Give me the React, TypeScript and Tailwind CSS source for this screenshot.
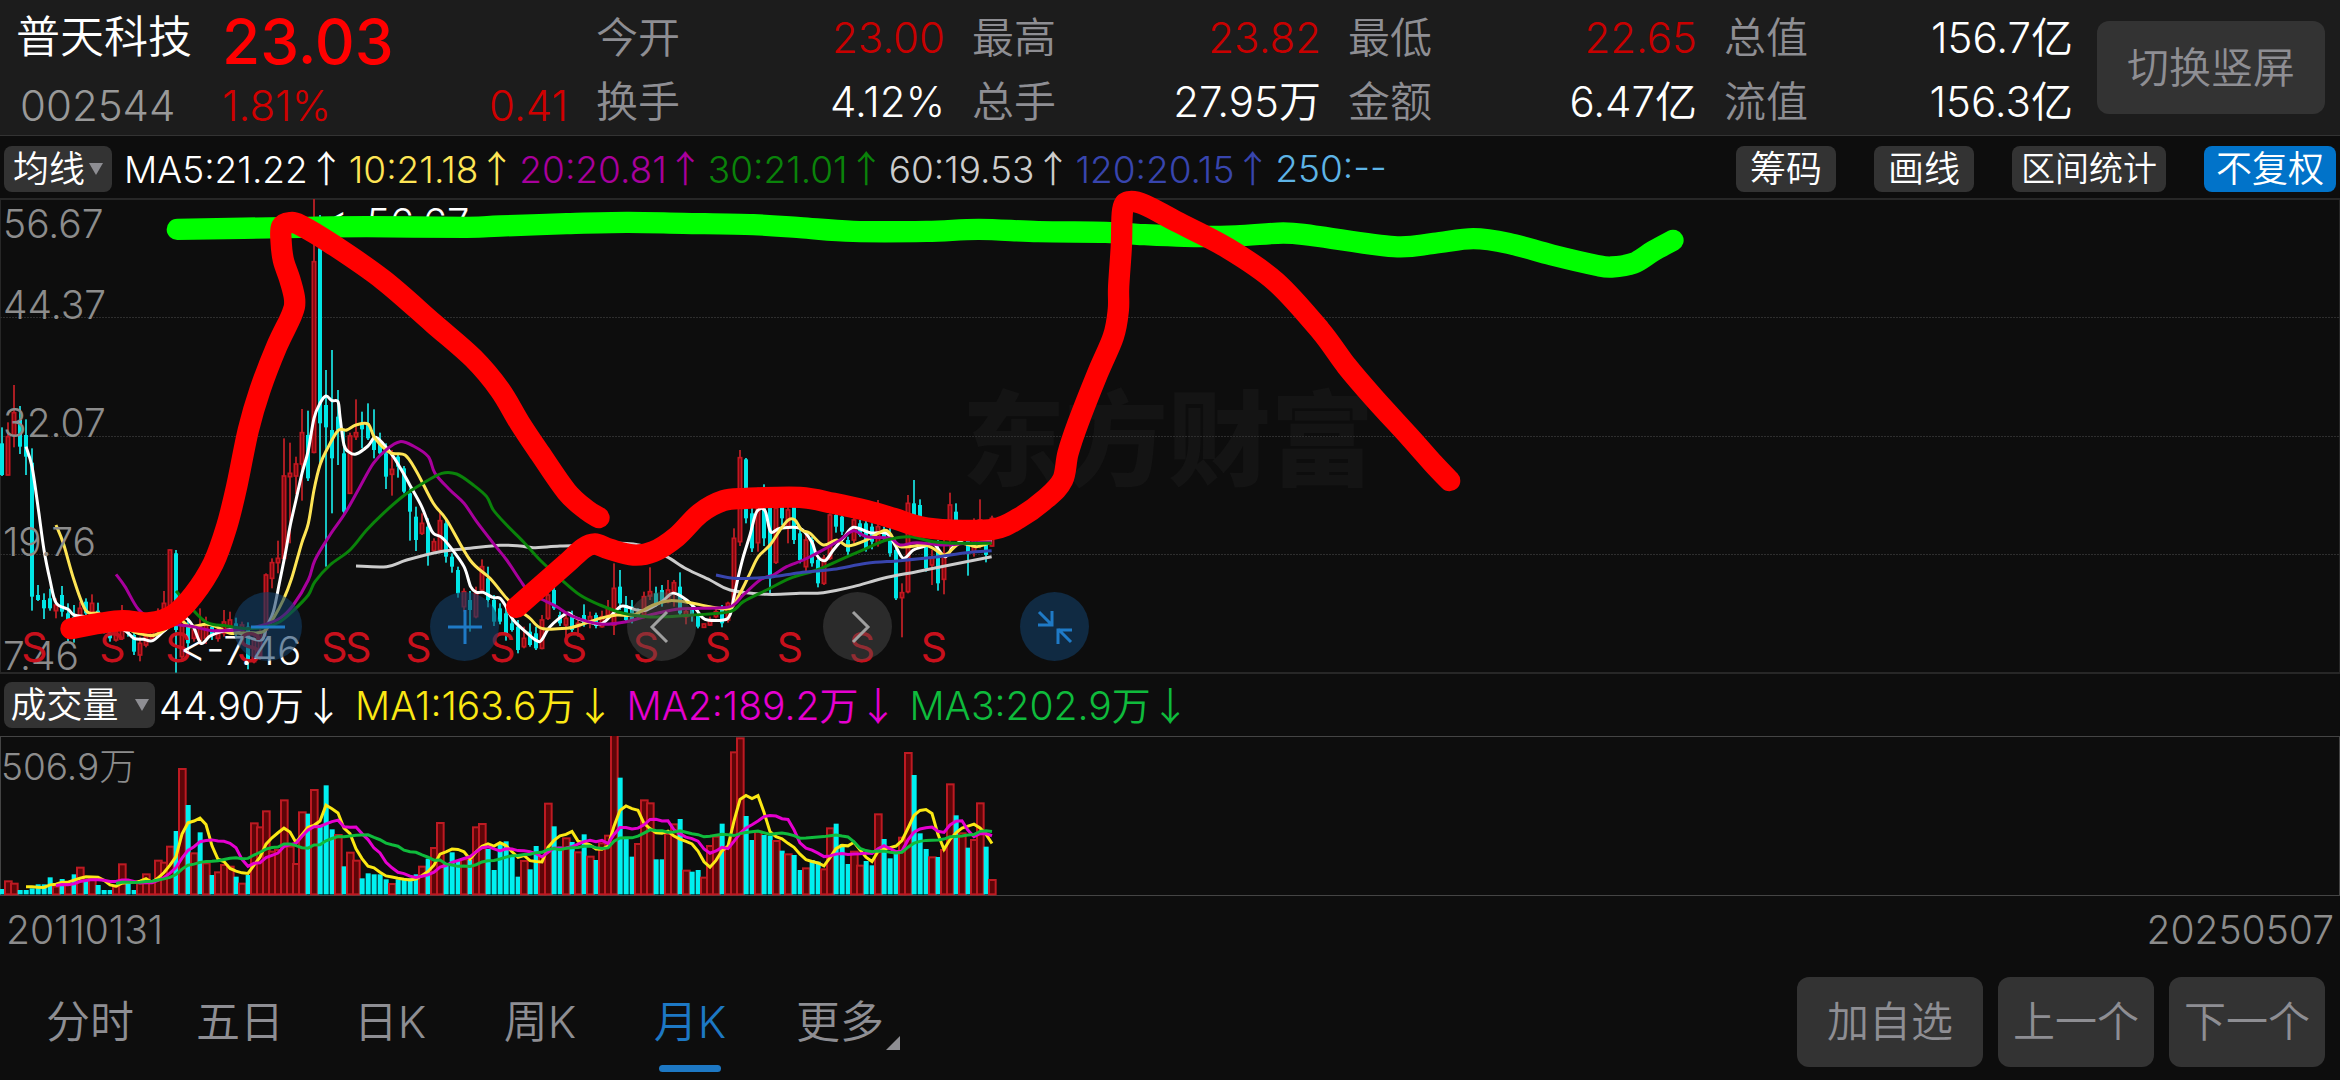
import * as React from "react";
import clsx from "clsx";

// Candle geometry is kept at three units per pixel.
// Each entry: colour (r = up, c = down), high, body top, body bottom, low.
const CANDLES = `
c712,760,855,858 r697,740,855,855 r585,668,735,772 c648,690,770,792 c688,735,800,855
c775,818,1220,1262 c1185,1215,1230,1233 c1210,1230,1255,1287 c1196,1225,1255,1262 r1225,1245,1262,1285
c1188,1215,1265,1280 c1240,1270,1320,1358 c1245,1280,1330,1358 r1235,1255,1280,1300 c1225,1235,1270,1290
r1213,1240,1265,1280 c1238,1262,1285,1300 c1280,1290,1320,1330 c1300,1310,1345,1355 r1320,1325,1350,1355
r1245,1290,1345,1350 c1280,1300,1330,1340 c1320,1335,1385,1395 r1340,1360,1395,1414 r1300,1340,1365,1372
r1280,1300,1345,1355 r1255,1270,1320,1330 r1203,1240,1290,1320 r1078,1080,1260,1280 c1080,1090,1320,1448
r1260,1290,1400,1410 c1290,1310,1360,1385 r1310,1320,1345,1355 r1255,1310,1350,1365 r1280,1300,1345,1362
c1300,1310,1335,1350 r1310,1320,1345,1355 r1260,1296,1330,1340 r1265,1290,1310,1330 c1283,1300,1330,1345
r1295,1305,1330,1340 c1297,1310,1410,1438 r1340,1350,1415,1420 r1310,1325,1400,1410 r1150,1155,1320,1340
r1105,1118,1165,1195 r1052,1105,1118,1150 r745,858,1105,1118 r758,850,860,1060 r800,822,858,912
r657,728,822,932 c662,735,865,873 r27,215,787,790 c75,175,700,820 c540,645,712,1130
c480,720,805,970 c600,680,720,825 c720,790,965,972 r728,738,910,912 r628,728,740,750
c665,700,718,775 c640,700,745,750 c658,745,780,805 c728,755,790,795 c760,790,860,897
r780,838,853,917 c795,800,830,863 c828,835,905,910 c895,910,965,1052 c950,980,1050,1083
r970,1000,1030,1035 c985,1010,1090,1127 r1045,1055,1082,1085 r965,992,1080,1085 c985,1000,1100,1118
c1090,1100,1130,1148 c1130,1140,1210,1223 r1195,1205,1250,1265 c1203,1230,1260,1325 r1190,1210,1280,1285
r1108,1130,1200,1205 c1130,1165,1230,1252 c1215,1230,1295,1308 c1240,1255,1295,1303 c1250,1270,1330,1352
c1285,1300,1320,1325 c1290,1310,1380,1390 r1310,1345,1370,1375 c1300,1325,1365,1370 c1310,1330,1375,1380
r1275,1290,1375,1378 r1200,1215,1285,1290 c1190,1200,1255,1260 c1265,1275,1300,1308 r1275,1285,1305,1345
c1262,1280,1320,1327 r1285,1300,1310,1340 c1243,1275,1300,1310 r1265,1280,1300,1315 c1268,1275,1308,1315
r1262,1280,1310,1313 r1230,1255,1275,1280 r1120,1195,1305,1335 c1140,1190,1240,1260 c1218,1245,1290,1295
c1230,1250,1290,1300 c1255,1265,1280,1290 r1205,1220,1275,1285 r1132,1205,1218,1230 c1190,1210,1240,1250
c1185,1200,1240,1250 r1170,1200,1235,1240 r1170,1178,1205,1250 c1147,1190,1270,1280 r1255,1265,1280,1303
c1240,1255,1275,1295 c1260,1275,1310,1315 r1300,1302,1312,1314 r1280,1290,1305,1308 r1255,1265,1280,1285
c1245,1260,1300,1312 r1235,1240,1290,1298 r1015,1045,1240,1250 r780,803,1055,1068 c804,808,985,1000
c950,970,1075,1086 r893,920,1058,1085 c883,900,1045,1068 c930,950,1165,1215 r940,955,1117,1122
c945,950,985,1005 r940,960,1010,1060 c945,950,1050,1062 c1010,1030,1110,1120 r1030,1050,1130,1145
c1040,1050,1120,1130 c1100,1110,1180,1192 r1095,1105,1180,1185 r970,975,1105,1110 c970,975,1010,1028
c970,980,1025,1035 c1040,1050,1085,1097 r980,990,1050,1060 c990,1000,1035,1040 c985,1000,1075,1085
c1000,1010,1055,1078 r930,1010,1060,1070 c1010,1020,1045,1050 c1010,1040,1090,1100 c1060,1080,1225,1230
r1180,1208,1223,1342 r915,940,1205,1210 c870,940,975,1000 c928,945,1000,1010 c1060,1070,1135,1145
r1080,1105,1125,1185 c1050,1080,1180,1202 r1050,1090,1168,1213 r908,945,1000,1090 c940,965,1000,1020
r1010,1030,1050,1060 c1020,1040,1090,1157 r985,1000,1085,1100 r928,990,1060,1075 c1040,1050,1095,1117
r977,985,1068,1070`
  .trim()
  .split(/\s+/)
  .map((item) => ({ up: item[0] === "r", v: item.slice(1).split(",").map(Number) }));

// Volume bar tops on the same grid, base line at 675.
const VOLUMES = `
c657 r634 r641 c660 c660 c655 c643 c643 c622 r650 c627 r640 c613 r593 c630 r628 c645 c660 c660 r650
r583 c635 c660 r640 r613 r635 r572 r578 r530 c483 r297 c405 r550 c487 r580 c615 r607 r585 r590 c620
r641 c615 r460 r472 r424 r545 r540 r391 r530 r582 r427 c431 r360 c465 c346 c478 r495 c589 r548 r572
c625 c610 c613 c613 c628 r642 c628 c628 c625 c613 r590 c566 r534 r459 c580 c547 c572 r568 c570 r472
r462 c537 c600 c520 c514 c555 c620 r573 c598 c528 r560 r401 c469 c530 r505 c516 r547 c493 r560 c570
r520 r497 r195 c323 c505 c560 r522 r391 r400 c568 c568 r492 r463 c447 r602 c605 c600 r623 r528 r500
c461 r530 r247 r205 c438 c510 r485 c495 c497 r513 c542 r553 c555 c600 r595 c570 c575 r598 r475 c461
c522 c582 r545 r587 c573 c586 r433 c507 c565 c550 r503 r249 c315 c490 c537 r562 c561 r540 r343 c436
r490 c533 r510 r400 c530 r630`
  .trim()
  .split(/\s+/)
  .map((item) => ({ up: item[0] === "r", top: Number(item.slice(1)) }));

const PRICE_LINES = [
  {
    color: "#cccccc",
    points:
      "1068,1128 1160,1130 1220,1110 1320,1085 1410,1075 1500,1066 1560,1068 1600,1073 1680,1068 1780,1065 1860,1060 1930,1068 2000,1100 2060,1137 2130,1170 2190,1200 2300,1213 2400,1210 2470,1208 2560,1190 2650,1165 2750,1145 2850,1125 2975,1100",
  },
  {
    color: "#ffffff",
    points:
      "78,770 96,830 114,950 132,1080 150,1170 168,1238 204,1258 222,1275 260,1280 300,1285 350,1310 380,1325 402,1345 430,1348 458,1352 490,1325 520,1300 555,1283 580,1310 603,1360 630,1338 665,1325 700,1320 740,1340 785,1350 800,1310 820,1265 840,1170 858,1080 870,1010 888,930 906,850 924,785 942,685 960,640 978,618 996,632 1014,635 1020,680 1032,765 1048,787 1068,792 1104,768 1125,742 1150,762 1180,800 1210,850 1235,895 1265,950 1285,1000 1300,1030 1325,1042 1350,1070 1392,1130 1412,1190 1430,1207 1450,1207 1478,1222 1500,1225 1518,1250 1540,1290 1580,1328 1610,1352 1625,1350 1650,1310 1700,1270 1720,1280 1745,1290 1800,1302 1830,1280 1860,1250 1880,1250 1910,1260 1940,1260 1985,1235 2020,1210 2060,1230 2090,1260 2115,1288 2170,1290 2190,1275 2202,1220 2215,1160 2230,1100 2250,1035 2270,965 2295,962 2312,1025 2340,1015 2400,1015 2435,1055 2450,1095 2475,1112 2500,1080 2530,1045 2560,1012 2610,1028 2660,1030 2685,1065 2710,1105 2740,1080 2770,1070 2800,1060 2835,1100 2860,1070 2900,1045 2940,1050 2975,1055",
  },
  {
    color: "#fee555",
    points:
      "168,1005 190,1060 222,1170 258,1262 295,1270 340,1290 400,1325 440,1335 465,1335 500,1315 540,1290 570,1310 620,1303 660,1315 690,1330 740,1328 790,1325 820,1285 850,1230 875,1165 905,1060 925,1000 942,900 960,825 980,780 1014,722 1040,720 1068,705 1104,702 1125,745 1170,788 1215,795 1250,845 1300,940 1340,990 1410,1110 1470,1165 1520,1225 1560,1262 1590,1285 1625,1315 1700,1315 1740,1305 1800,1285 1850,1275 1900,1275 1960,1245 2010,1232 2070,1238 2130,1250 2190,1255 2220,1210 2250,1150 2275,1100 2310,1065 2340,1020 2365,990 2385,990 2405,1020 2430,1030 2470,1065 2510,1050 2545,1068 2600,1050 2650,1022 2670,1030 2700,1070 2770,1065 2800,1075 2835,1095 2880,1060 2930,1070 2975,1055",
  },
  {
    color: "#a8009c",
    points:
      "348,1153 375,1190 415,1258 460,1290 520,1303 580,1310 640,1322 730,1318 790,1305 840,1285 880,1245 925,1170 945,1110 990,1035 1035,970 1080,890 1120,820 1160,778 1200,755 1240,768 1285,800 1305,850 1350,900 1392,940 1430,995 1480,1060 1520,1110 1560,1170 1590,1210 1630,1230 1670,1250 1720,1280 1800,1302 1880,1295 1950,1275 2030,1258 2100,1255 2190,1250 2230,1215 2280,1170 2320,1155 2360,1130 2410,1110 2460,1085 2520,1050 2560,1022 2600,1040 2670,1045 2700,1065 2750,1058 2830,1065 2900,1060 2975,1055",
  },
  {
    color: "#0a830a",
    points:
      "528,1203 570,1250 620,1297 680,1308 740,1316 800,1310 840,1295 880,1262 925,1215 945,1175 990,1125 1050,1080 1100,1020 1150,970 1210,918 1260,885 1325,850 1370,852 1420,885 1460,920 1480,960 1520,1005 1570,1055 1620,1110 1680,1165 1740,1215 1800,1245 1870,1270 1940,1280 2000,1280 2080,1275 2190,1265 2230,1235 2300,1200 2370,1165 2450,1140 2520,1110 2600,1075 2660,1050 2730,1040 2800,1055 2880,1060 2975,1060",
  },
  {
    color: "#3845ae",
    points:
      "2148,1155 2200,1165 2250,1165 2320,1160 2400,1148 2500,1138 2600,1120 2700,1112 2800,1102 2900,1088 2975,1082",
  },
];

const GREEN_MARK =
  "532,118 900,112 1100,110 1400,112 1500,108 1700,101 1880,97 2050,100 2260,104 2400,113 2560,124 2780,124 2937,118 3115,125 3317,127 3412,133 3554,139 3708,138 3850,129 3945,138 4182,170 4301,160 4420,146 4526,160 4656,195 4790,226 4835,231 4900,220 4960,183 5019,151";

const RED_MARKS = [
  "213,1316 300,1300 370,1292 450,1298 520,1275 580,1215 640,1120 680,1010 710,890 745,720 780,600 830,470 875,375 884,330 870,270 850,210 843,150 845,110 870,98 900,105 1000,165 1150,270 1300,400 1420,505 1500,600 1560,700 1620,790 1700,905 1760,960 1797,983",
  "1550,1252 1620,1190 1700,1120 1750,1075 1785,1062 1830,1078 1900,1095 1960,1085 2030,1040 2100,970 2170,932 2240,925 2400,922 2500,940 2600,962 2680,985 2760,1010 2850,1020 2979,1018 3056,985 3139,925 3188,870 3204,790 3234,700 3293,550 3340,440 3355,360 3356,290 3364,170 3368,60 3388,35 3435,45 3530,95 3684,175 3827,275 3960,420 4040,528 4123,625 4230,742 4301,822 4349,872",
];

const SELL_MARKS = [103, 337, 535, 750, 1003, 1075, 1255, 1507, 1722, 1938, 2154, 2370, 2586, 2802];

const Y_LABELS = [
  { text: "56.67", y: 145 },
  { text: "44.37", y: 387 },
  { text: "32.07", y: 742 },
  { text: "19.76", y: 1098 },
  { text: "7.46", y: 1440 },
];

const QUOTES = [
  { label: "今开", value: "23.00", red: true, label2: "换手", value2: "4.12%" },
  { label: "最高", value: "23.82", red: true, label2: "总手", value2: "27.95万" },
  { label: "最低", value: "22.65", red: true, label2: "金额", value2: "6.47亿" },
  { label: "总值", value: "156.7亿", red: false, label2: "流值", value2: "156.3亿" },
];

const MA_ITEMS = [
  { text: "MA5:21.22", arrow: "↑", className: "text-white" },
  { text: "10:21.18", arrow: "↑", className: "text-[#fee555]" },
  { text: "20:20.81", arrow: "↑", className: "text-[#a8009c]" },
  { text: "30:21.01", arrow: "↑", className: "text-[#0a830a]" },
  { text: "60:19.53", arrow: "↑", className: "text-[#cccccc]" },
  { text: "120:20.15", arrow: "↑", className: "text-[#3845ae]" },
  { text: "250:--", arrow: "", className: "text-[#5eb4e6]" },
];

const VOL_ITEMS = [
  { text: "44.90万", arrow: "↓", className: "text-white" },
  { text: "MA1:163.6万", arrow: "↓", className: "text-[#fbe814]" },
  { text: "MA2:189.2万", arrow: "↓", className: "text-[#e600cf]" },
  { text: "MA3:202.9万", arrow: "↓", className: "text-[#0fbb3c]" },
];

const TABS = ["分时", "五日", "日K", "周K", "月K", "更多"];

// Catmull-Rom spline through the given points.
function smooth(points: string) {
  const p = points.split(" ").map((s) => s.split(",").map(Number));
  let d = `M${p[0][0]} ${p[0][1]}`;
  for (let i = 0; i < p.length - 1; i++) {
    const a = p[Math.max(i - 1, 0)];
    const b = p[i];
    const c = p[i + 1];
    const e = p[Math.min(i + 2, p.length - 1)];
    d += `C${b[0] + (c[0] - a[0]) / 6} ${b[1] + (c[1] - a[1]) / 6} ${c[0] - (e[0] - b[0]) / 6} ${
      c[1] - (e[1] - b[1]) / 6
    } ${c[0]} ${c[1]}`;
  }
  return d;
}

function movingAverage(span: number) {
  const out: string[] = [];
  for (let i = span - 1; i < VOLUMES.length; i++) {
    let sum = 0;
    for (let k = 0; k < span; k++) sum += VOLUMES[i - k].top;
    out.push(`${18 * i + 6},${sum / span}`);
  }
  return out.join(" ");
}

function PriceChart() {
  return (
    <svg viewBox="0 0 2340 474" className="block w-full overflow-visible" aria-label="月K线">
      <rect x="0" y="0" width="2340" height="474" fill="none" stroke="#272727" strokeWidth="2" />
      <text
        x="962"
        y="279"
        fontSize="103"
        fontWeight="900"
        fill="#141414"
        fontFamily="'Noto Sans CJK SC', sans-serif"
      >
        东方财富
      </text>
      {[118, 237, 355].map((y) => (
        <line key={y} x1="0" x2="2340" y1={y + 0.5} y2={y + 0.5} stroke="#2e2e2e" strokeDasharray="2 1" />
      ))}
      <g transform="translate(0 -9) scale(0.33333)">
        {CANDLES.map(({ up, v }, i) => {
          const x = 18 * i + 6;
          return up ? (
            <g key={i}>
              <line x1={x} x2={x} y1={v[0]} y2={v[3]} stroke="#a91d22" strokeWidth="6" />
              <rect
                x={x - 5}
                y={v[1]}
                width="10"
                height={Math.max(v[2] - v[1], 4)}
                fill="#7a0a0f"
                stroke="#c41620"
                strokeWidth="5"
              />
            </g>
          ) : (
            <g key={i}>
              <line x1={x} x2={x} y1={v[0]} y2={v[3]} stroke="#16c4c4" strokeWidth="6" />
              <rect x={x - 6} y={v[1]} width="12" height={v[2] - v[1]} fill="#00e6e6" />
            </g>
          );
        })}
        {PRICE_LINES.map((line) => (
          <path key={line.color} d={smooth(line.points)} fill="none" stroke={line.color} strokeWidth="9" />
        ))}
      </g>
      <g fontSize="39" fontWeight="300" fill="#8c8c8c">
        {Y_LABELS.map(({ text, y }) => (
          <text key={text} x="3" y={y / 3 - 9}>
            {text}
          </text>
        ))}
      </g>
      <g fontSize="41" fontWeight="400" fill="#c8101c" textAnchor="middle">
        {SELL_MARKS.map((x) => (
          <text key={x} x={x / 3} y="463">
            S
          </text>
        ))}
      </g>
      <g fontSize="40" fontWeight="350" fill="#ffffff">
        <text x="180" y="466">
          &lt;-7.46
        </text>
        <text x="322" y="38">
          &lt;-56.67
        </text>
      </g>
    </svg>
  );
}

function HandMarks() {
  return (
    <svg viewBox="0 0 2340 474" className="pointer-events-none absolute inset-x-0 top-0 w-full overflow-visible">
      <g
        transform="translate(0 -9) scale(0.33333)"
        fill="none"
        strokeWidth="64"
        strokeLinecap="round"
        strokeLinejoin="round"
      >
        <path d={smooth(GREEN_MARK)} stroke="#00ff00" />
        {RED_MARKS.map((mark) => (
          <path key={mark} d={smooth(mark)} stroke="#ff0000" />
        ))}
      </g>
    </svg>
  );
}

function VolumeChart() {
  return (
    <svg viewBox="0 0 2340 160" className="block w-full" aria-label="成交量图">
      <rect x="0.5" y="0.5" width="2339" height="159" fill="none" stroke="#444444" />
      <g transform="translate(0 -66) scale(0.33333)">
        {VOLUMES.map(({ up, top }, i) => {
          const x = 18 * i + 6;
          return up ? (
            <rect
              key={i}
              x={x - 9}
              y={top}
              width="20"
              height={673 - top}
              fill="#5e0508"
              stroke="#bd1a22"
              strokeWidth="6"
            />
          ) : (
            <rect key={i} x={x - 7} y={top} width="15" height={673 - top} fill="#00f0f0" />
          );
        })}
        <polyline points={movingAverage(5)} fill="none" stroke="#fbe814" strokeWidth="9" />
        <polyline points={movingAverage(10)} fill="none" stroke="#e600cf" strokeWidth="9" />
        <polyline points={movingAverage(20)} fill="none" stroke="#0fbb3c" strokeWidth="9" />
      </g>
      <text x="1" y="44" fontSize="37" fontWeight="300" fill="#8c8c8c">
        506.9万
      </text>
    </svg>
  );
}

interface ChartButtonProps {
  label: string;
  blue?: boolean;
  className: string;
  children: React.ReactNode;
}

function ChartButton({ label, blue, className, children }: ChartButtonProps) {
  return (
    <button
      type="button"
      aria-label={label}
      className={clsx(
        "absolute top-[393px] flex h-[69px] w-[69px] items-center justify-center rounded-full",
        blue ? "bg-[#133e66]/60 text-[#1f7ac6]" : "bg-[#505050]/45 text-[#a0a0a0]",
        className
      )}
    >
      <svg viewBox="0 0 36 36" className="h-9 w-9" fill="none" stroke="currentColor" strokeWidth="3">
        {children}
      </svg>
    </button>
  );
}

function Indicators({ items, className }: { items: typeof MA_ITEMS; className?: string }) {
  return (
    <div className={clsx("flex items-center whitespace-nowrap", className)}>
      {items.map((item) => (
        <span key={item.text} className={item.className}>
          {item.text}
          {item.arrow && <span className="font-['Noto_Sans_CJK_SC',sans-serif]">{item.arrow}</span>}
        </span>
      ))}
    </div>
  );
}

function Chip({ children, className }: { children: React.ReactNode; className?: string }) {
  return (
    <button
      type="button"
      className={clsx("flex h-[46px] items-center justify-center rounded-lg text-4xl/none text-white", className)}
    >
      {children}
    </button>
  );
}

export default function App() {
  return (
    <main className="min-h-screen w-full overflow-hidden bg-[#0d0d0d] font-['Inter','Noto_Sans_CJK_SC',sans-serif] font-[350] text-[#8e8e93]">
      {/* Quote header */}
      <header className="flex h-[136px] items-center border-b border-[#333] bg-[#1c1c1c] pr-[15px] text-[42px]/[64px]">
        <div className="grid w-[568px] grid-cols-[206px_1fr] grid-rows-[74px_62px] pl-4">
          <h1 className="text-[44px]/[74px] text-white">普天科技</h1>
          <strong className="self-end text-[62px]/[64px] font-medium text-[#ff0000]">23.03</strong>
          <span className="pl-1 text-[#999]">002544</span>
          <div className="flex justify-between text-[#d10000]">
            <span>1.81%</span>
            <span>0.41</span>
          </div>
        </div>
        <dl className="ml-7 grid flex-1 grid-cols-4 gap-x-[27px] pt-1">
          {QUOTES.map((q) => (
            <div key={q.label} className="grid grid-cols-[auto_1fr]">
              <dt>{q.label}</dt>
              <dd className={clsx("text-right", q.red ? "text-[#c80000]" : "text-white")}>{q.value}</dd>
              <dt>{q.label2}</dt>
              <dd className="text-right text-white">{q.value2}</dd>
            </div>
          ))}
        </dl>
        <button type="button" className="ml-6 h-[93px] w-[228px] rounded-xl bg-[#333] text-[42px]/none">
          切换竖屏
        </button>
      </header>

      {/* Moving average bar */}
      <div className="flex h-[63px] items-center pt-0.5 pr-1 pl-1">
        <Chip className="w-[108px] gap-1 bg-[#333]">
          均线
          <span className="border-x-[7px] border-t-[12px] border-x-transparent border-t-[#8e8e93]" />
        </Chip>
        <Indicators items={MA_ITEMS} className="ml-3 gap-1 text-[37px]/none" />
        <div className="ml-auto flex gap-[38px]">
          <Chip className="w-[100px] bg-[#333]">筹码</Chip>
          <Chip className="w-[100px] bg-[#333]">画线</Chip>
          <Chip className="w-[154px] bg-[#333]">
            <span className="text-[34px]/none">区间统计</span>
          </Chip>
          <Chip className="w-[132px] bg-[#0173c9]">不复权</Chip>
        </div>
      </div>

      {/* Monthly candles */}
      <section className="relative">
        <PriceChart />
        <ChartButton label="缩小" blue className="left-[233px]">
          <path d="M1 18h34" />
        </ChartButton>
        <ChartButton label="放大" blue className="left-[430px]">
          <path d="M1 18h34M18 1v34" />
        </ChartButton>
        <ChartButton label="左移" className="left-[627px]">
          <path d="M23 3 8 18l15 15" />
        </ChartButton>
        <ChartButton label="右移" className="left-[823px]">
          <path d="M13 3l15 15-15 15" />
        </ChartButton>
        <ChartButton label="退出全屏" blue className="left-[1020px]">
          <path d="M2 3 15 16M1 16h14V2M34 33 21 20M21 35V21h14" />
        </ChartButton>
        <HandMarks />
      </section>

      {/* Volume */}
      <div className="flex h-[63px] items-center pl-1">
        <Chip className="w-[151px] gap-4 bg-[#333]">
          成交量
          <span className="border-x-[7px] border-t-[12px] border-x-transparent border-t-[#8e8e93]" />
        </Chip>
        <Indicators items={VOL_ITEMS} className="ml-1 gap-3 text-[39px]/none" />
      </div>
      <VolumeChart />
      <div className="flex justify-between px-1.5 pt-2 text-[39px]/[52px] font-light text-[#8c8c8c]">
        <time>20110131</time>
        <time>20250507</time>
      </div>

      {/* Period tabs */}
      <footer className="flex items-center justify-between px-[15px] pt-4">
        <nav className="flex">
          {TABS.map((tab) => (
            <button
              key={tab}
              type="button"
              className={clsx("relative h-[100px] w-[150px] text-[44px]/none", tab === "月K" && "text-[#1d78c4]")}
            >
              {tab}
              {tab === "月K" && (
                <span className="absolute bottom-0 left-1/2 h-[7px] w-[62px] -translate-x-1/2 rounded-full bg-[#1d78c4]" />
              )}
              {tab === "更多" && (
                <span className="absolute right-[15px] bottom-[22px] border-b-[14px] border-l-[14px] border-b-[#8e8e93] border-l-transparent" />
              )}
            </button>
          ))}
        </nav>
        <div className="flex gap-[15px] text-[42px]/none">
          <button type="button" className="h-[90px] w-[186px] rounded-xl bg-[#333]">加自选</button>
          <button type="button" className="h-[90px] w-[156px] rounded-xl bg-[#333]">上一个</button>
          <button type="button" className="h-[90px] w-[156px] rounded-xl bg-[#333]">下一个</button>
        </div>
      </footer>
    </main>
  );
}
